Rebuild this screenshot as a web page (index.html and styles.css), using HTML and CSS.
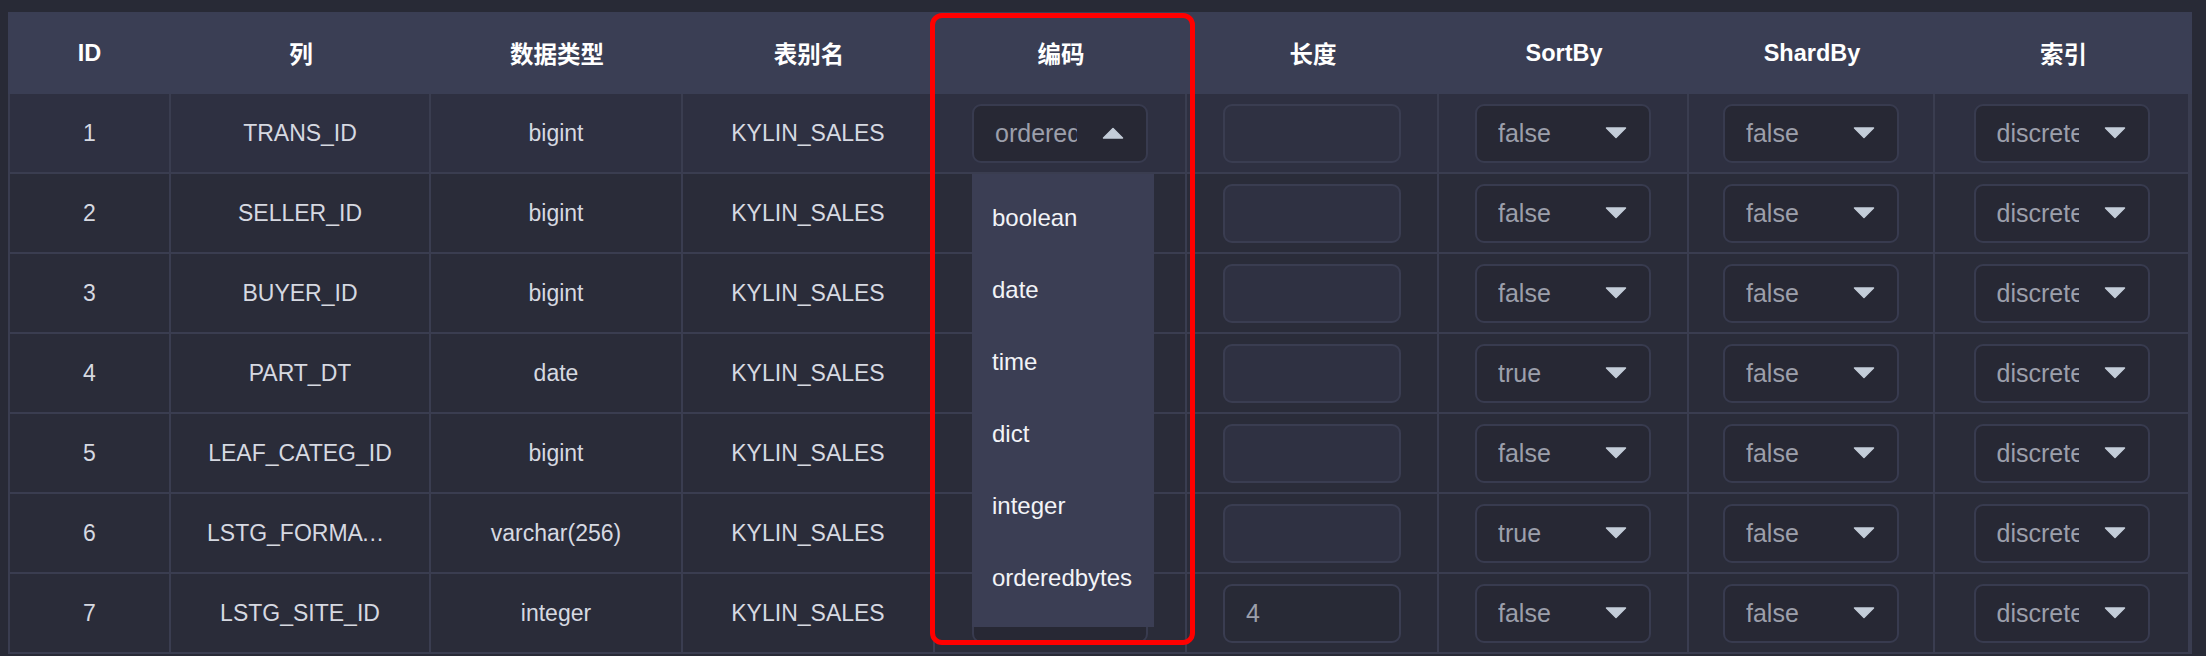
FILE: index.html
```html
<!DOCTYPE html>
<html lang="zh">
<head>
<meta charset="utf-8">
<title>维度编码</title>
<link rel="stylesheet" href="styles.css">
</head>
<body>
<div class="page">
  <div class="table">
    <div class="row head">
      <div class="cell">ID</div>
      <div class="cell">列</div>
      <div class="cell">数据类型</div>
      <div class="cell">表别名</div>
      <div class="cell">编码</div>
      <div class="cell">长度</div>
      <div class="cell">SortBy</div>
      <div class="cell">ShardBy</div>
      <div class="cell">索引</div>
    </div>

    <div class="row body hover">
      <div class="cell">1</div>
      <div class="cell"><span class="txt">TRANS_ID</span></div>
      <div class="cell">bigint</div>
      <div class="cell">KYLIN_SALES</div>
      <div class="cell"><div class="sel open"><span class="val">orderedbytes</span><svg class="arr" viewBox="0 0 22 12"><path d="M1.5 11 H20.5 L11 1.5 Z"/></svg></div></div>
      <div class="cell"><div class="inp disabled"></div></div>
      <div class="cell"><div class="sel"><span class="val">false</span><svg class="arr" viewBox="0 0 22 12"><path d="M1.5 1 H20.5 L11 10.5 Z"/></svg></div></div>
      <div class="cell"><div class="sel"><span class="val">false</span><svg class="arr" viewBox="0 0 22 12"><path d="M1.5 1 H20.5 L11 10.5 Z"/></svg></div></div>
      <div class="cell"><div class="sel"><span class="val">discrete</span><svg class="arr" viewBox="0 0 22 12"><path d="M1.5 1 H20.5 L11 10.5 Z"/></svg></div></div>
    </div>

    <div class="row body">
      <div class="cell">2</div>
      <div class="cell"><span class="txt">SELLER_ID</span></div>
      <div class="cell">bigint</div>
      <div class="cell">KYLIN_SALES</div>
      <div class="cell"><div class="sel under"></div></div>
      <div class="cell"><div class="inp disabled"></div></div>
      <div class="cell"><div class="sel"><span class="val">false</span><svg class="arr" viewBox="0 0 22 12"><path d="M1.5 1 H20.5 L11 10.5 Z"/></svg></div></div>
      <div class="cell"><div class="sel"><span class="val">false</span><svg class="arr" viewBox="0 0 22 12"><path d="M1.5 1 H20.5 L11 10.5 Z"/></svg></div></div>
      <div class="cell"><div class="sel"><span class="val">discrete</span><svg class="arr" viewBox="0 0 22 12"><path d="M1.5 1 H20.5 L11 10.5 Z"/></svg></div></div>
    </div>

    <div class="row body">
      <div class="cell">3</div>
      <div class="cell"><span class="txt">BUYER_ID</span></div>
      <div class="cell">bigint</div>
      <div class="cell">KYLIN_SALES</div>
      <div class="cell"><div class="sel under"></div></div>
      <div class="cell"><div class="inp disabled"></div></div>
      <div class="cell"><div class="sel"><span class="val">false</span><svg class="arr" viewBox="0 0 22 12"><path d="M1.5 1 H20.5 L11 10.5 Z"/></svg></div></div>
      <div class="cell"><div class="sel"><span class="val">false</span><svg class="arr" viewBox="0 0 22 12"><path d="M1.5 1 H20.5 L11 10.5 Z"/></svg></div></div>
      <div class="cell"><div class="sel"><span class="val">discrete</span><svg class="arr" viewBox="0 0 22 12"><path d="M1.5 1 H20.5 L11 10.5 Z"/></svg></div></div>
    </div>

    <div class="row body">
      <div class="cell">4</div>
      <div class="cell"><span class="txt">PART_DT</span></div>
      <div class="cell">date</div>
      <div class="cell">KYLIN_SALES</div>
      <div class="cell"><div class="sel under"></div></div>
      <div class="cell"><div class="inp disabled"></div></div>
      <div class="cell"><div class="sel"><span class="val">true</span><svg class="arr" viewBox="0 0 22 12"><path d="M1.5 1 H20.5 L11 10.5 Z"/></svg></div></div>
      <div class="cell"><div class="sel"><span class="val">false</span><svg class="arr" viewBox="0 0 22 12"><path d="M1.5 1 H20.5 L11 10.5 Z"/></svg></div></div>
      <div class="cell"><div class="sel"><span class="val">discrete</span><svg class="arr" viewBox="0 0 22 12"><path d="M1.5 1 H20.5 L11 10.5 Z"/></svg></div></div>
    </div>

    <div class="row body">
      <div class="cell">5</div>
      <div class="cell"><span class="txt">LEAF_CATEG_ID</span></div>
      <div class="cell">bigint</div>
      <div class="cell">KYLIN_SALES</div>
      <div class="cell"><div class="sel under"></div></div>
      <div class="cell"><div class="inp disabled"></div></div>
      <div class="cell"><div class="sel"><span class="val">false</span><svg class="arr" viewBox="0 0 22 12"><path d="M1.5 1 H20.5 L11 10.5 Z"/></svg></div></div>
      <div class="cell"><div class="sel"><span class="val">false</span><svg class="arr" viewBox="0 0 22 12"><path d="M1.5 1 H20.5 L11 10.5 Z"/></svg></div></div>
      <div class="cell"><div class="sel"><span class="val">discrete</span><svg class="arr" viewBox="0 0 22 12"><path d="M1.5 1 H20.5 L11 10.5 Z"/></svg></div></div>
    </div>

    <div class="row body">
      <div class="cell">6</div>
      <div class="cell"><span class="txt">LSTG_FORMAT_NAME</span></div>
      <div class="cell">varchar(256)</div>
      <div class="cell">KYLIN_SALES</div>
      <div class="cell"><div class="sel under"></div></div>
      <div class="cell"><div class="inp disabled"></div></div>
      <div class="cell"><div class="sel"><span class="val">true</span><svg class="arr" viewBox="0 0 22 12"><path d="M1.5 1 H20.5 L11 10.5 Z"/></svg></div></div>
      <div class="cell"><div class="sel"><span class="val">false</span><svg class="arr" viewBox="0 0 22 12"><path d="M1.5 1 H20.5 L11 10.5 Z"/></svg></div></div>
      <div class="cell"><div class="sel"><span class="val">discrete</span><svg class="arr" viewBox="0 0 22 12"><path d="M1.5 1 H20.5 L11 10.5 Z"/></svg></div></div>
    </div>

    <div class="row body">
      <div class="cell">7</div>
      <div class="cell"><span class="txt">LSTG_SITE_ID</span></div>
      <div class="cell">integer</div>
      <div class="cell">KYLIN_SALES</div>
      <div class="cell"><div class="sel under"></div></div>
      <div class="cell"><div class="inp">4</div></div>
      <div class="cell"><div class="sel"><span class="val">false</span><svg class="arr" viewBox="0 0 22 12"><path d="M1.5 1 H20.5 L11 10.5 Z"/></svg></div></div>
      <div class="cell"><div class="sel"><span class="val">false</span><svg class="arr" viewBox="0 0 22 12"><path d="M1.5 1 H20.5 L11 10.5 Z"/></svg></div></div>
      <div class="cell"><div class="sel"><span class="val">discrete</span><svg class="arr" viewBox="0 0 22 12"><path d="M1.5 1 H20.5 L11 10.5 Z"/></svg></div></div>
    </div>

    <ul class="dropdown">
      <li>boolean</li>
      <li>date</li>
      <li>time</li>
      <li>dict</li>
      <li>integer</li>
      <li>orderedbytes</li>
    </ul>

    <div class="highlight"></div>
  </div>
</div>
</body>
</html>
```

FILE: styles.css
```css
* { box-sizing: border-box; }

html, body {
  margin: 0;
  padding: 0;
  background: #282a36;
  overflow: hidden;
}

body {
  font-family: "Liberation Sans", Arial, "Noto Sans CJK SC", sans-serif;
  width: 2206px;
  height: 656px;
}

.page {
  padding: 12px 14px 0 8px;
}

.table {
  position: relative;
  width: 2184px;
}

.row {
  display: grid;
  grid-template-columns: 163px 260px 252px 252px 252px 252px 250px 246px 257px;
}

.cell {
  display: flex;
  align-items: center;
  justify-content: center;
  min-width: 0;
}

.head {
  height: 82px;
  background: #3a3e54;
}

.head .cell {
  color: #ffffff;
  font-weight: bold;
  font-size: 23.5px;
}

.body {
  height: 80px;
  background: #2a2c39;
  border-bottom: 2px solid #3a3d50;
}

.body.hover {
  background: #2e3041;
}

.body .cell {
  color: #d6d9e1;
  font-size: 23px;
  border-right: 2px solid #3a3d50;
}

.body .cell:first-child {
  border-left: 2px solid #3a3d50;
}

.body .cell:last-child {
  border-right: 4px solid #3a3d50;
}

.txt {
  display: block;
  max-width: 186px;
  overflow: hidden;
  white-space: nowrap;
  text-overflow: ellipsis;
}

.sel {
  width: 176px;
  height: 59px;
  border: 2px solid #383b4f;
  border-radius: 9px;
  background: #272834;
  display: flex;
  align-items: center;
  padding-left: 21px;
  padding-right: 22px;
  justify-content: space-between;
}

.val {
  display: block;
  width: 82px;
  overflow: hidden;
  white-space: nowrap;
  color: #9c9fab;
  font-size: 25px;
}

.arr {
  width: 22px;
  height: 12px;
  display: block;
}

.arr path {
  fill: #c4cdd9;
  stroke: #c4cdd9;
  stroke-width: 1.5;
  stroke-linejoin: round;
}

.inp {
  width: 178px;
  height: 59px;
  border: 2px solid #3a3d51;
  border-radius: 9px;
  background: #282a36;
  display: flex;
  align-items: center;
  padding-left: 21px;
  color: #9c9fab;
  font-size: 25px;
}

.inp.disabled {
  background: #2f3142;
}

.dropdown {
  position: absolute;
  left: 964px;
  top: 162px;
  width: 182px;
  height: 453px;
  margin: 0;
  padding: 8px 0 0 0;
  list-style: none;
  background: #3b3e54;
}

.dropdown li {
  height: 72px;
  line-height: 72px;
  padding-left: 20px;
  color: #f2f3f7;
  font-size: 24px;
  white-space: nowrap;
}

.highlight {
  position: absolute;
  left: 922px;
  top: 1px;
  width: 265px;
  height: 632px;
  border: 5px solid #ff0000;
  border-radius: 12px;
  pointer-events: none;
}
```
